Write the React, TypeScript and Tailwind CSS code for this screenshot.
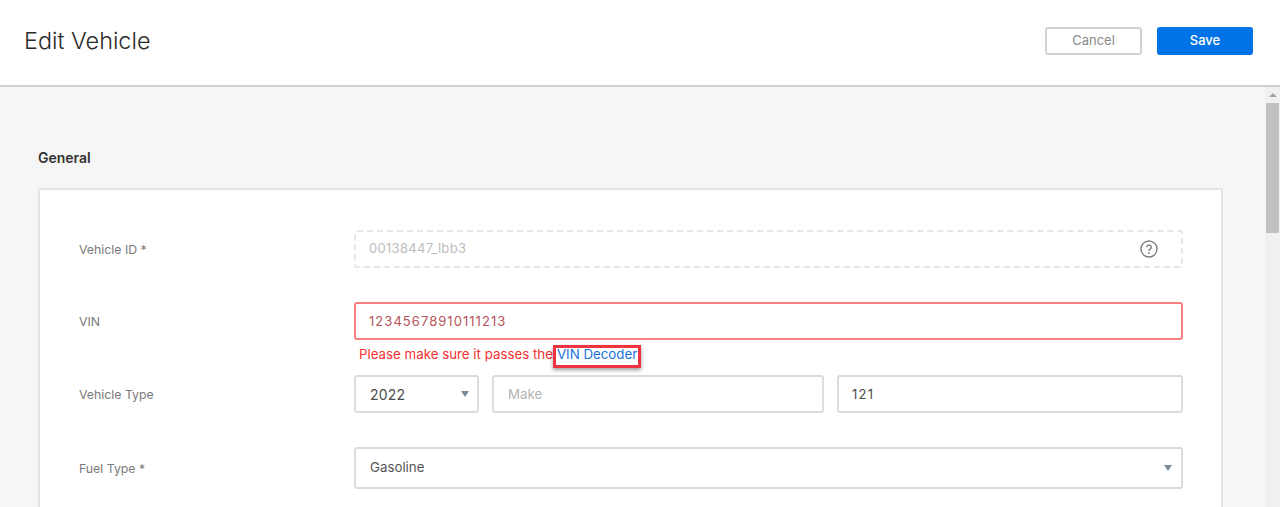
function Label({ children }: { children: string }) {
  return <div className="mt-[2px] w-[314px] shrink-0 pl-[39px] text-[12.3px] text-[#7a7a7a]">{children}</div>;
}

function Caret() {
  return <span className="ml-auto h-0 w-0 border-x-[4px] border-t-[6px] border-x-transparent border-t-[#7b8a96]" />;
}

export default function App() {
  return (
    <div className="flex h-[507px] w-[1280px] flex-col overflow-hidden bg-white font-['Inter',sans-serif]">
      <header className="flex h-[87px] shrink-0 items-center justify-between border-b-2 border-[#d0d0d0] pb-[4px] pl-6 pr-[27px]">
        <h1 className="mt-[1px] text-[23.4px] font-light leading-8 text-[#2b2b2b]">Edit Vehicle</h1>
        <div className="flex gap-[15px]">
          <button className="h-[28px] w-[97px] rounded-[3px] border-2 border-[#d2d2d2] bg-white text-[13px] text-[#8a8a8a]">Cancel</button>
          <button className="h-[28px] w-[96px] rounded-[3px] bg-[#0073e6] text-[13px] font-medium text-white">Save</button>
        </div>
      </header>

      <div className="flex min-h-0 flex-1 bg-[#f6f6f6]">
        <main className="min-w-0 flex-1 pl-[38px] pr-[42px] pt-[62px]">
          <h2 className="mb-[21px] text-[14px] font-semibold leading-[18px] text-[#333333]">General</h2>
          <section className="h-[400px] rounded-[3px] border-2 border-[#e4e4e4] bg-white pr-[38px] pt-[40px]">
            <div className="flex items-center">
              <Label>Vehicle ID *</Label>
              <div className="flex h-[38px] flex-1 items-center rounded-[3px] border-2 border-dashed border-[#e6e6e6] pl-[13px] text-[13px] tracking-[0.3px] text-[#bdbdbd]">
                00138447_lbb3
                <svg className="ml-auto mr-[23px]" width="18" height="18" viewBox="0 0 18 18" fill="none">
                  <circle cx="9" cy="9" r="8" stroke="#808080" strokeWidth="1.4" />
                  <path d="M6.8 7.2a2.2 2.2 0 1 1 3.4 1.9c-.8.5-1.2.9-1.2 1.8" stroke="#808080" strokeWidth="1.5" />
                  <circle cx="9" cy="13" r="0.9" fill="#808080" />
                </svg>
              </div>
            </div>

            <div className="mt-[34px] flex items-center">
              <Label>VIN</Label>
              <div className="flex h-[38px] flex-1 items-center rounded-[3px] border-2 border-[#f77f7f] pl-[13px] pt-[1px] text-[13px] tracking-[1.05px] text-[#b5545a]">
                12345678910111213
              </div>
            </div>
            <div className="mt-[4px] flex h-[22px] items-center pl-[319px] text-[13.3px] text-[#f5302f]">
              Please make sure it passes the
              <span className="relative ml-[4px] text-[#1a73d9]">
                VIN Decoder
                <span className="absolute -inset-x-[4px] -bottom-[3px] top-0 border-[3px] border-[#ef3340] shadow-[0_2px_4px_rgba(0,0,0,0.4)]" />
              </span>
            </div>

            <div className="mt-[9px] flex items-center">
              <Label>Vehicle Type</Label>
              <div className="flex flex-1 gap-[13px] text-[13.3px]">
                <div className="flex h-[38px] w-[125px] items-center rounded-[3px] border-2 border-[#dcdcdc] pl-[14px] pr-[8px] text-[14px] tracking-[0.2px] text-[#4d4d4d]">
                  2022
                  <Caret />
                </div>
                <div className="flex h-[38px] w-[332px] items-center rounded-[3px] border-2 border-[#dcdcdc] px-[14px] pt-[1px] text-[#b3b3b3]">Make</div>
                <div className="flex h-[38px] flex-1 items-center rounded-[3px] border-2 border-[#dcdcdc] pl-[13px] pt-[1px] text-[13px] tracking-[1.3px] text-[#4d4d4d]">121</div>
              </div>
            </div>

            <div className="mt-[34px] flex items-center">
              <Label>Fuel Type *</Label>
              <div className="flex h-[42px] flex-1 items-center rounded-[3px] border-2 border-[#dcdcdc] pl-[14px] pr-[9px] text-[13.3px] text-[#555555]">
                Gasoline
                <Caret />
              </div>
            </div>
          </section>
        </main>

        <div className="flex w-[15px] shrink-0 flex-col items-center bg-[#f1f1f1]">
          <span className="mt-[6px] h-0 w-0 border-x-[4px] border-b-[4px] border-x-transparent border-b-[#a3a3a3]" />
          <div className="mt-[6px] h-[130px] w-[13px] bg-[#c1c1c1]" />
        </div>
      </div>
    </div>
  );
}
